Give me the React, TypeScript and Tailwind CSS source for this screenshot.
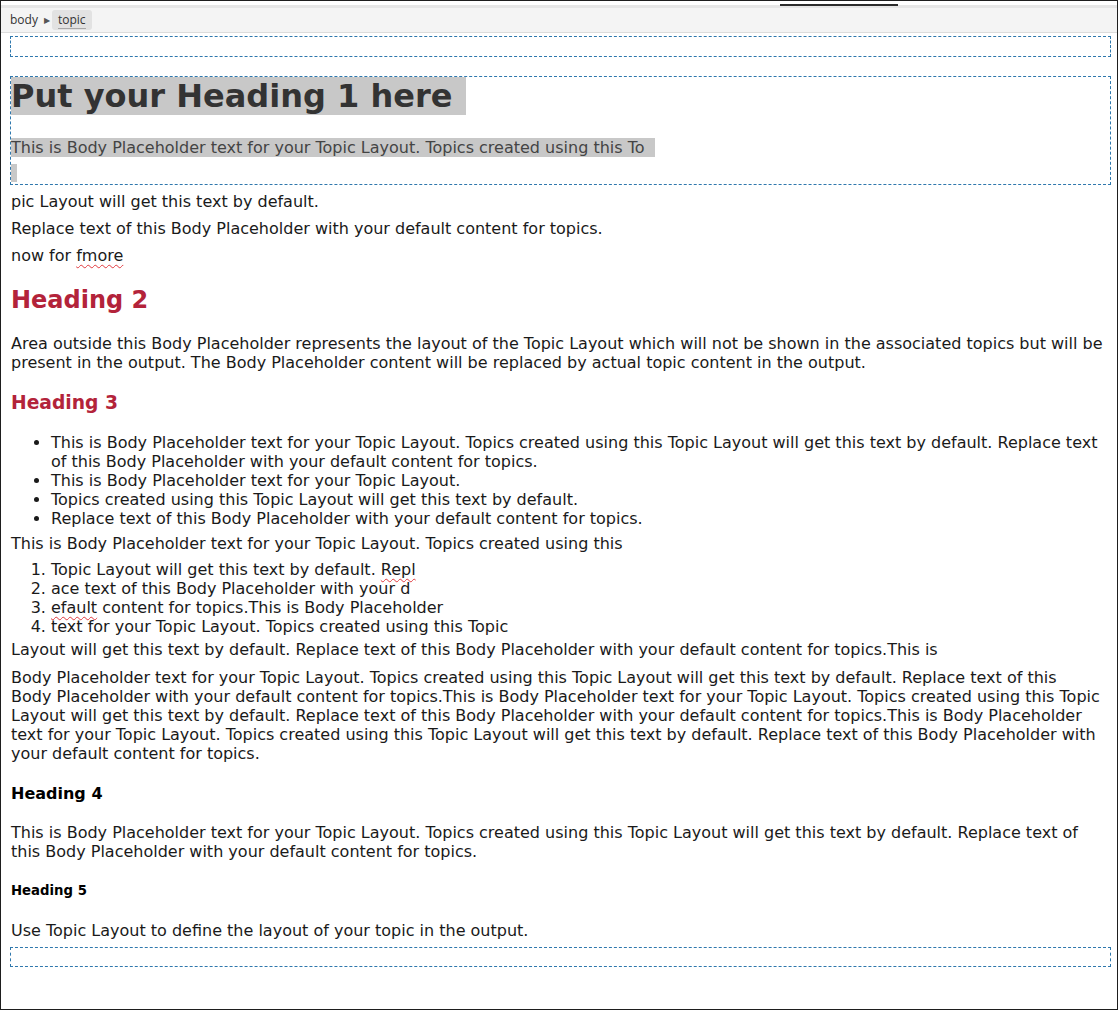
import React from "react";

const body =
  "This is Body Placeholder text for your Topic Layout. Topics created using this Topic Layout will get this text by default. Replace text of this Body Placeholder with your default content for topics.";

function Misspelt({ children }: { children: React.ReactNode }) {
  return (
    <span className="underline decoration-wavy decoration-[#e0393e] decoration-1 underline-offset-[3px]">
      {children}
    </span>
  );
}

function Breadcrumb() {
  return (
    <div className="relative">
      <div className="h-[4px] bg-white" />
      <div className="relative h-[3px] bg-[#e6e6e6]">
        <div className="absolute left-[779px] top-[-1px] h-[2px] w-[118px] bg-[#2b2b2b]" />
      </div>
      <div className="flex h-[25px] items-center border-b border-[#dcdcdc] bg-[#f4f4f4] pl-[9px] font-['Open_Sans',sans-serif] text-[12px] text-[#333]">
        <span>body</span>
        <span className="ml-[6px] mr-[2px] text-[8px] text-[#555]">&#9654;</span>
        <span className="flex h-[20px] items-center rounded-[3px] bg-[#e2e2e2] px-[6px]">
          <span className="border-b border-[#a8a8a8] leading-[17px]">topic</span>
        </span>
      </div>
    </div>
  );
}

export default function App() {
  return (
    <div className="h-[1010px] w-[1118px] overflow-hidden border border-[#1e1e1e] bg-white">
      <Breadcrumb />

      <div className="pl-[9px] pr-[6px] font-['DejaVu_Sans',Verdana,sans-serif] text-[16px] leading-[19px] text-[#1a1a1a]">
        <div className="mt-[3px] h-[21px] border border-dashed border-[#2f78ad]" />

        <div className="mt-[19px] h-[109px] border border-dashed border-[#2f78ad]">
          <h1 className="mt-[1px] text-[32px] font-bold leading-[37px] text-[#333]">
            <span className="bg-[#c8c8c8] pr-[2px]">Put your Heading 1 here&nbsp;</span>
          </h1>
          <p className="mt-[23px] text-[#444]">
            <span className="bg-[#c8c8c8] pr-[5px]">
              This is Body Placeholder text for your Topic Layout. Topics created using this To&nbsp;
            </span>
          </p>
          <div className="mt-[7px] h-[18px] w-[6px] bg-[#c8c8c8]" />
        </div>

        <div className="px-[1px]">
          <p className="mt-[7px]">pic Layout will get this text by default.</p>
          <p className="mt-[8px]">Replace text of this Body Placeholder with your default content for topics.</p>
          <p className="mt-[8px]">
            now for <Misspelt>fmore</Misspelt>
          </p>

          <h2 className="mt-[21px] text-[24px] font-bold leading-[28px] text-[#b3233a]">Heading 2</h2>
          <p className="mt-[20px]">
            Area outside this Body Placeholder represents the layout of the Topic Layout which will not be shown in
            the associated topics but will be present in the output. The Body Placeholder content will be replaced by
            actual topic content in the output.
          </p>

          <h3 className="mt-[20px] text-[18.72px] font-bold leading-[22px] text-[#b3233a]">Heading 3</h3>
          <ul className="mt-[19px] list-disc pl-[40px]">
            <li>{body}</li>
            <li>This is Body Placeholder text for your Topic Layout.</li>
            <li>Topics created using this Topic Layout will get this text by default.</li>
            <li>Replace text of this Body Placeholder with your default content for topics.</li>
          </ul>
          <p className="mt-[6px]">This is Body Placeholder text for your Topic Layout. Topics created using this</p>
          <ol className="mt-[7px] list-decimal pl-[40px]">
            <li>
              Topic Layout will get this text by default. <Misspelt>Repl</Misspelt>
            </li>
            <li>ace text of this Body Placeholder with your d</li>
            <li>
              <Misspelt>efault</Misspelt> content for topics.This is Body Placeholder
            </li>
            <li>text for your Topic Layout. Topics created using this Topic</li>
          </ol>
          <p className="mt-[4px]">
            Layout will get this text by default. Replace text of this Body Placeholder with your default content for
            topics.This is
          </p>
          <p className="mt-[9px]">
            Body Placeholder text for your Topic Layout. Topics created using this Topic Layout will get this text by
            default. Replace text of this
            <br />
            Body Placeholder with your default content for topics.This is Body Placeholder text for your Topic Layout.
            Topics created using this Topic
            <br />
            Layout will get this text by default. Replace text of this Body Placeholder with your default content for
            topics.This is Body Placeholder
            <br />
            text for your Topic Layout. Topics created using this Topic Layout will get this text by default. Replace
            text of this Body Placeholder with
            <br />
            your default content for topics.
          </p>

          <h4 className="mt-[21px] font-bold text-black">Heading 4</h4>
          <p className="mt-[20px]">{body}</p>

          <h5 className="mt-[22px] text-[13.28px] font-bold leading-[16px] text-black">Heading 5</h5>
          <p className="mt-[22px]">Use Topic Layout to define the layout of your topic in the output.</p>
        </div>

        <div className="mt-[7px] h-[20px] border border-dashed border-[#2f78ad]" />
      </div>
    </div>
  );
}
